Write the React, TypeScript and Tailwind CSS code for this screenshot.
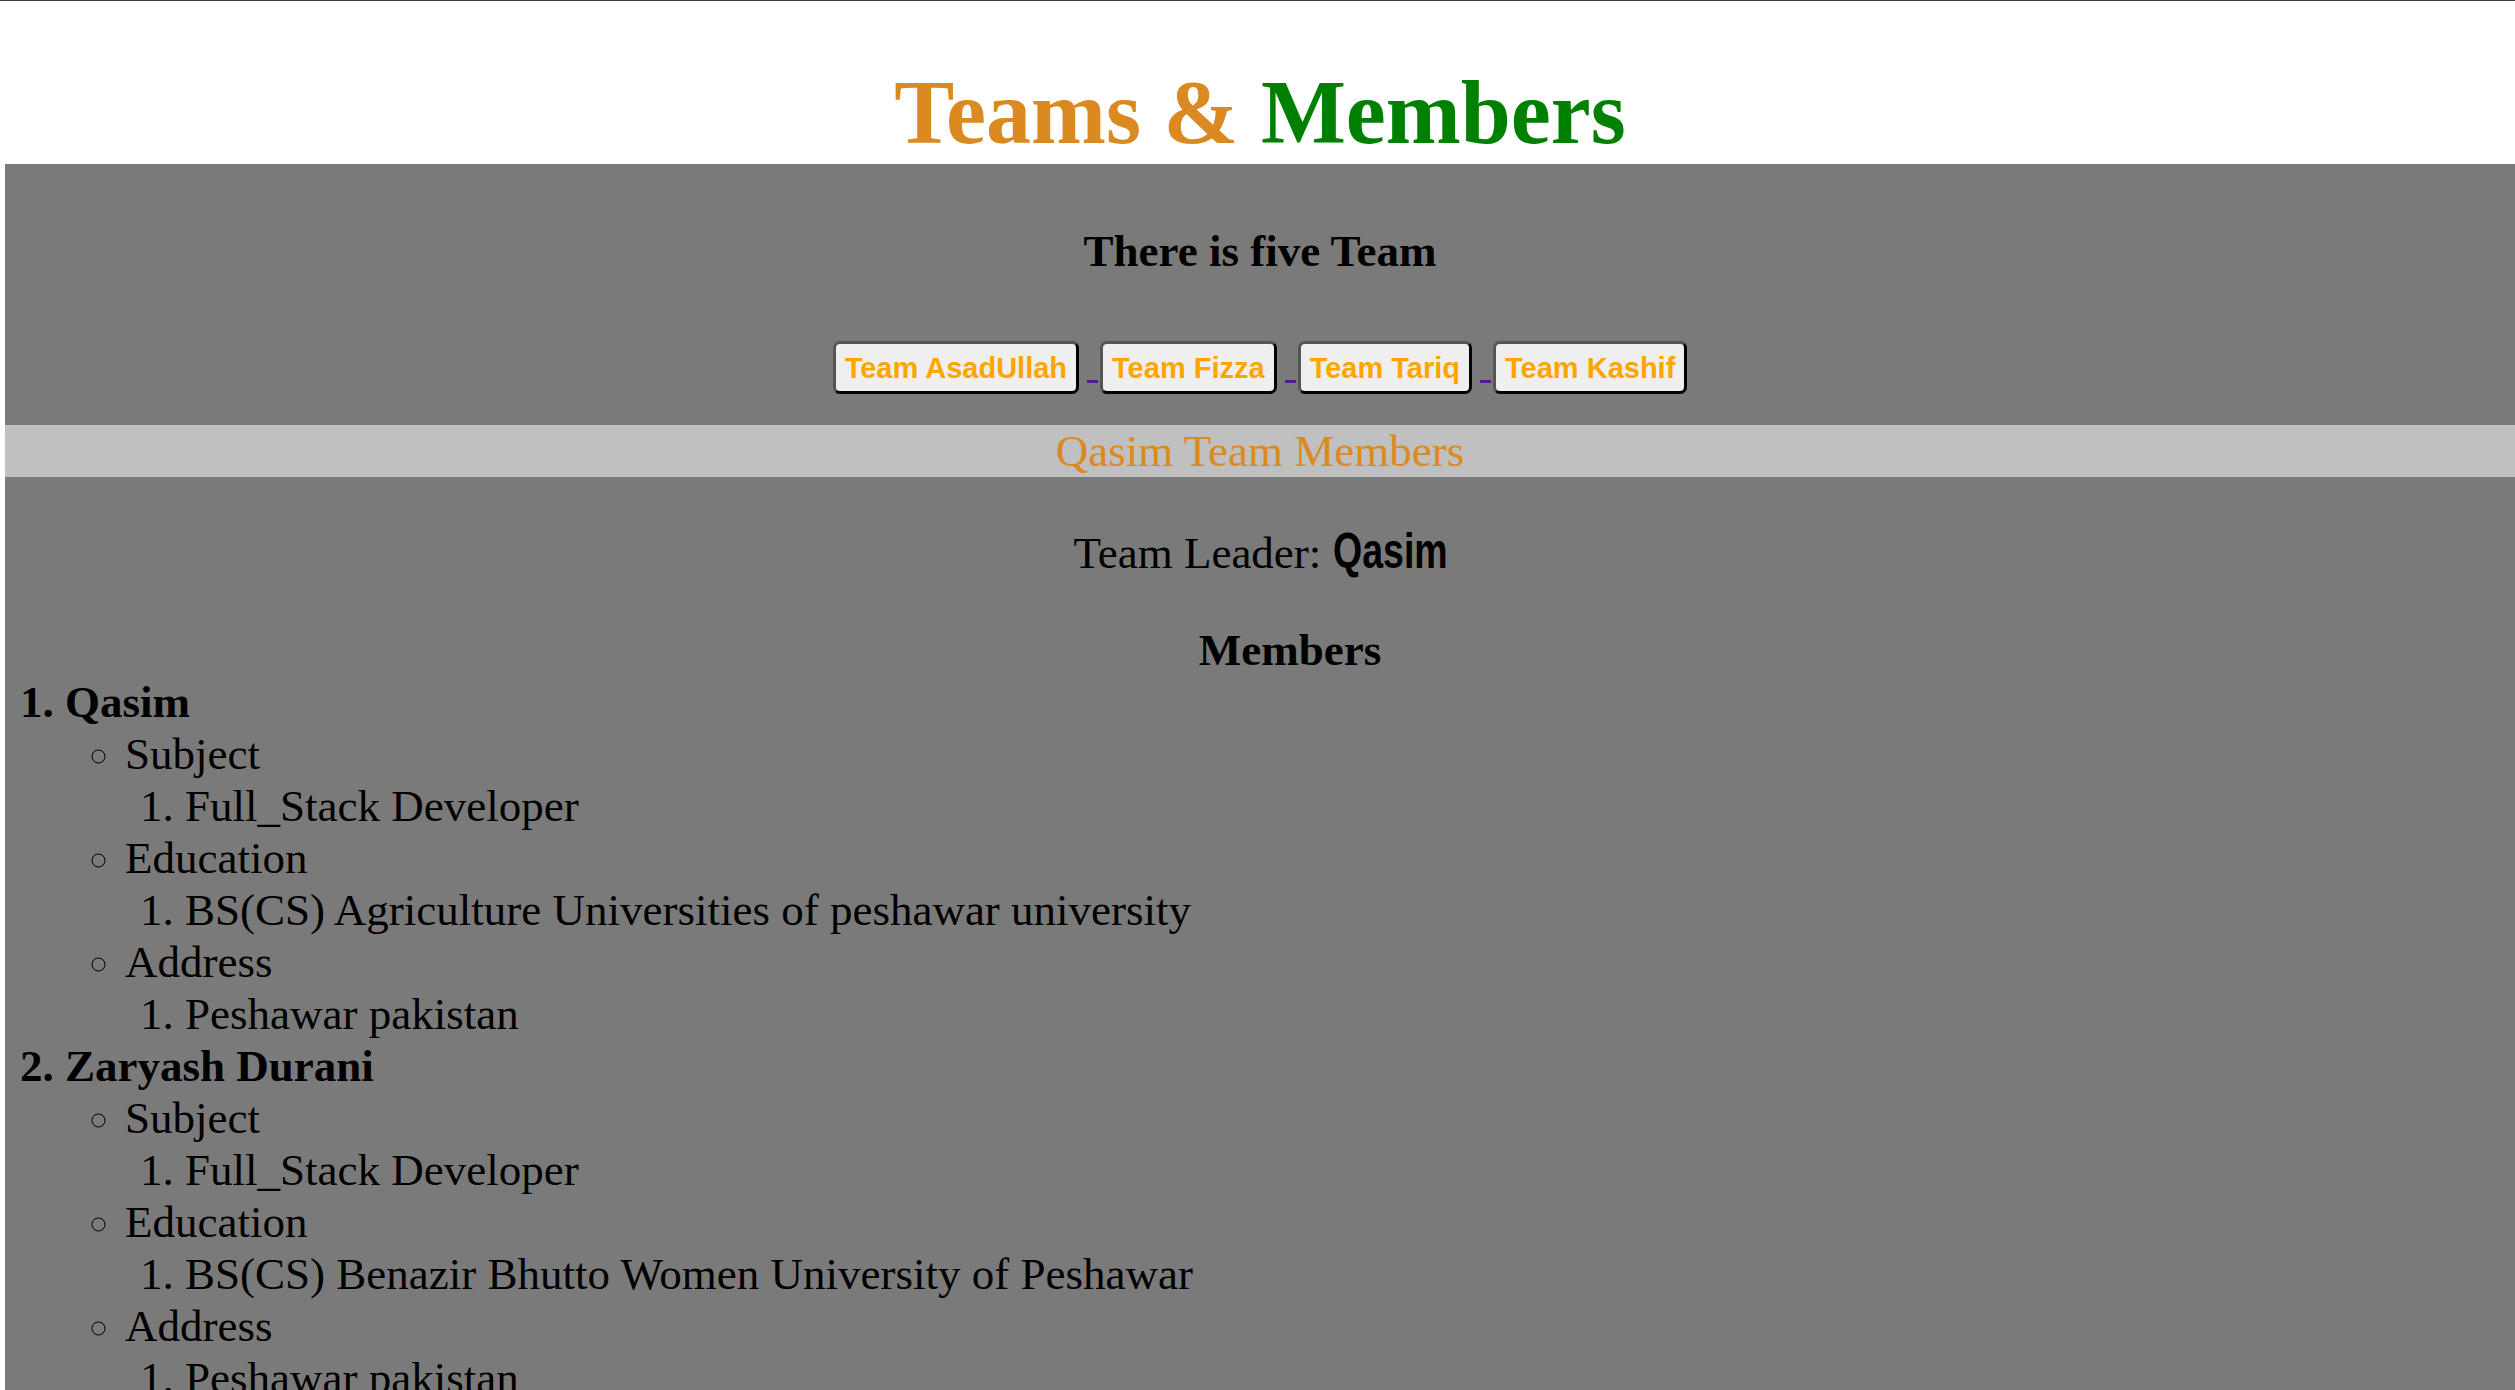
import React from 'react'

const teams = ['Team AsadUllah', 'Team Fizza', 'Team Tariq', 'Team Kashif']

const members = [
  {
    name: 'Qasim',
    subject: 'Full_Stack Developer',
    education: 'BS(CS) Agriculture Universities of peshawar university',
    address: 'Peshawar pakistan',
  },
  {
    name: 'Zaryash Durani',
    subject: 'Full_Stack Developer',
    education: 'BS(CS) Benazir Bhutto Women University of Peshawar',
    address: 'Peshawar pakistan',
  },
]

function Detail({ label, value }: { label: string; value: string }) {
  return (
    <li>
      {label}
      <ol className="list-decimal pl-[60px]">
        <li>{value}</li>
      </ol>
    </li>
  )
}

export default function App() {
  return (
    <div className="h-[1390px] overflow-hidden border-t border-[#3c3c3c] bg-white pl-[5px] font-['Liberation_Serif',serif] text-[45px] leading-[52px] text-black">
      <h1 className="pt-[60px] text-center text-[90px] font-bold leading-[103px]">
        <span className="text-[#db8a22]">Teams &amp; </span>
        <span className="text-[#008000]">Members</span>
      </h1>

      <section className="bg-[#7a7a7a] pt-[61px] pb-[200px]">
        <h4 className="text-center font-bold">There is five Team</h4>

        <div className="mt-[64px] flex items-start justify-center">
          {teams.map((t, i) => (
            <div key={t} className="flex items-start">
              <button className="flex h-[53px] items-center rounded-[7px] border-[3px] border-[#555] border-r-black border-b-black bg-[#efefef] px-[9px] font-['Liberation_Sans',sans-serif] text-[29px] font-bold text-[#ffa500]">
                {t}
              </button>
              {i < teams.length - 1 && (
                <span className="mt-[39px] mr-[2px] ml-[8px] h-[3px] w-[11px] bg-[#551a8b]" />
              )}
            </div>
          ))}
        </div>

        <div className="mt-[31px] bg-[#c0c0c0] text-center text-[#db8a22]">Qasim Team Members</div>

        <p className="mt-[48px] text-center">
          Team Leader:{' '}
          <span className="inline-block w-[114px] text-left align-baseline">
            <span className="inline-block origin-left scale-x-[0.75] whitespace-nowrap font-['Liberation_Sans',sans-serif] text-[50px] font-bold">
              Qasim
            </span>
          </span>
        </p>

        <div className="mt-[45px] pl-[60px]">
          <p className="text-center font-bold">Members</p>
          <ol className="list-decimal">
            {members.map((m) => (
              <li key={m.name} className="font-bold">
                {m.name}
                <ul className="list-[circle] pl-[60px] font-normal">
                  <Detail label="Subject" value={m.subject} />
                  <Detail label="Education" value={m.education} />
                  <Detail label="Address" value={m.address} />
                </ul>
              </li>
            ))}
          </ol>
        </div>
      </section>
    </div>
  )
}
